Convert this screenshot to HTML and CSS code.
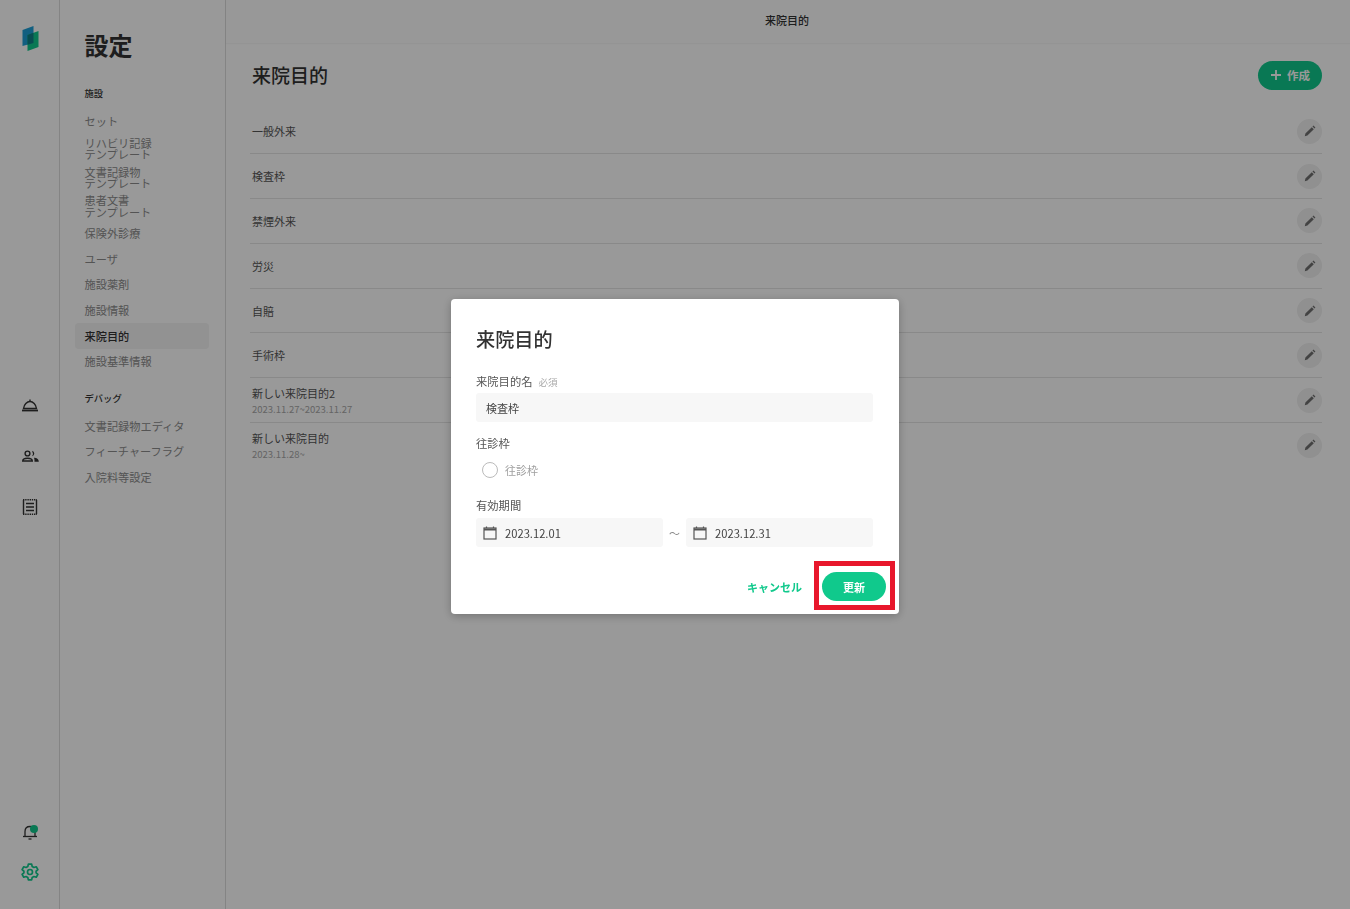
FILE: index.html
```html
<!DOCTYPE html>
<html lang="ja">
<head>
  <meta charset="UTF-8">
  <meta name="viewport" content="width=device-width, initial-scale=1.0">
  <title>来院目的</title>
  <link rel="stylesheet" href="styles.css">
</head>
<body>
  <div class="app">
    <aside class="rail">
      <svg class="logo" width="24" height="28" viewBox="0 0 24 28">
        <path d="M4.500 6 L15.500 2 V19 L4.500 22 Z" fill="#1f9fd6"/>
        <path d="M9.500 11 L20.500 7 V23 L9.500 27 Z" fill="#10c98c"/>
        <path d="M9.500 11 L15.500 8.800 V19 L9.500 20.700 Z" fill="#0f7f88"/>
      </svg>
      <div class="rail-group">
        <svg class="rail-icon" width="20" height="20" viewBox="0 0 20 20" fill="none" stroke="#333" stroke-width="1.400">
          <path d="M3.500 13.500 C4 9.500 7 6.500 10 6.500 C13 6.500 16 9.500 16.500 13.500 Z"/>
          <path d="M2 15.500 H18" stroke-width="1.800"/>
          <path d="M10 4.500 V6.500"/>
        </svg>
        <svg class="rail-icon" width="20" height="20" viewBox="0 1 20 20" fill="#333">
          <circle cx="7.500" cy="8.500" r="2.400" fill="none" stroke="#333" stroke-width="1.400"/>
          <path d="M12 5.800 A2.800 2.800 0 0 1 12 11.300 A5 5 0 0 0 12 5.800 Z"/>
          <path d="M2.700 16 C2.700 14 5 13.200 7.500 13.200 C10 13.200 12.300 14 12.300 16 Z" fill="none" stroke="#333" stroke-width="1.400"/>
          <path d="M14 12.800 C16.500 13 18.800 14 18.800 16.700 H14.500 C14.500 15 14.500 14 14 12.800 Z"/>
        </svg>
        <svg class="rail-icon" width="20" height="20" viewBox="0 0 20 20" fill="none" stroke="#333" stroke-width="1.400">
          <path d="M3.500 3 V17 M16.500 3 V17"/>
          <path d="M3 2.700 H17 M3 17.300 H17" stroke-dasharray="1.400 .8"/>
          <path d="M6 6.500 H14 M6 10 H14 M6 13.500 H14"/>
        </svg>
      </div>
      <div class="rail-bottom">
        <div class="bell">
          <svg width="20" height="20" viewBox="0 0 20 20" fill="none" stroke="#333" stroke-width="1.300">
            <path d="M5 14 V9.500 C5 6.500 7 4.500 10 4.500 C13 4.500 15 6.500 15 9.500 V14"/>
            <path d="M3 14.500 H17"/>
            <path d="M8.500 17 H11.500"/>
          </svg>
          <span class="bell-dot"></span>
        </div>
        <svg class="gear" width="20" height="20" viewBox="0 0 24 24" fill="none" stroke="#10c98c" stroke-width="2" stroke-linejoin="round">
          <path d="M10 2.500 H14 L14.600 5.400 L16.700 6.600 L19.500 5.700 L21.500 9.200 L19.300 11.100 V12.900 L21.500 14.800 L19.500 18.300 L16.700 17.400 L14.600 18.600 L14 21.500 H10 L9.400 18.600 L7.300 17.400 L4.500 18.300 L2.500 14.800 L4.700 12.900 V11.100 L2.500 9.200 L4.500 5.700 L7.300 6.600 L9.400 5.400 Z"/>
          <circle cx="12" cy="12" r="3"/>
        </svg>
      </div>
    </aside>

    <nav class="side">
      <h1 class="side-title">設定</h1>
      <h2 class="side-head">施設</h2>
      <ul class="side-list">
        <li>セット</li>
        <li>リハビリ記録<br>テンプレート</li>
        <li>文書記録物<br>テンプレート</li>
        <li>患者文書<br>テンプレート</li>
        <li>保険外診療</li>
        <li>ユーザ</li>
        <li>施設薬剤</li>
        <li>施設情報</li>
        <li class="active">来院目的</li>
        <li>施設基準情報</li>
      </ul>
      <h2 class="side-head debug">デバッグ</h2>
      <ul class="side-list">
        <li>文書記録物エディタ</li>
        <li>フィーチャーフラグ</li>
        <li>入院料等設定</li>
      </ul>
    </nav>

    <main class="main">
      <header class="topbar">来院目的</header>
      <div class="content">
        <div class="content-head">
          <h2 class="page-title">来院目的</h2>
          <button class="create-btn">
            <svg width="12" height="12" viewBox="0 0 12 12" stroke="#fff" stroke-width="1.800"><path d="M6 1 V11 M1 6 H11"/></svg>
            作成
          </button>
        </div>
        <ul class="rows">
          <li class="row"><div>一般外来</div><span class="edit"><svg width="12" height="12" viewBox="0 0 12 12" fill="#707070"><path d="M.8 11.200 L1.400 8.600 L7.800 2.200 L9.800 4.200 L3.400 10.600 Z M8.500 1.500 L9.400 .6 L11.400 2.600 L10.500 3.500 Z"/></svg></span></li>
          <li class="row"><div>検査枠</div><span class="edit"><svg width="12" height="12" viewBox="0 0 12 12" fill="#707070"><path d="M.8 11.200 L1.400 8.600 L7.800 2.200 L9.800 4.200 L3.400 10.600 Z M8.500 1.500 L9.400 .6 L11.400 2.600 L10.500 3.500 Z"/></svg></span></li>
          <li class="row"><div>禁煙外来</div><span class="edit"><svg width="12" height="12" viewBox="0 0 12 12" fill="#707070"><path d="M.8 11.200 L1.400 8.600 L7.800 2.200 L9.800 4.200 L3.400 10.600 Z M8.500 1.500 L9.400 .6 L11.400 2.600 L10.500 3.500 Z"/></svg></span></li>
          <li class="row"><div>労災</div><span class="edit"><svg width="12" height="12" viewBox="0 0 12 12" fill="#707070"><path d="M.8 11.200 L1.400 8.600 L7.800 2.200 L9.800 4.200 L3.400 10.600 Z M8.500 1.500 L9.400 .6 L11.400 2.600 L10.500 3.500 Z"/></svg></span></li>
          <li class="row"><div>自賠</div><span class="edit"><svg width="12" height="12" viewBox="0 0 12 12" fill="#707070"><path d="M.8 11.200 L1.400 8.600 L7.800 2.200 L9.800 4.200 L3.400 10.600 Z M8.500 1.500 L9.400 .6 L11.400 2.600 L10.500 3.500 Z"/></svg></span></li>
          <li class="row"><div>手術枠</div><span class="edit"><svg width="12" height="12" viewBox="0 0 12 12" fill="#707070"><path d="M.8 11.200 L1.400 8.600 L7.800 2.200 L9.800 4.200 L3.400 10.600 Z M8.500 1.500 L9.400 .6 L11.400 2.600 L10.500 3.500 Z"/></svg></span></li>
          <li class="row"><div class="dated">新しい来院目的2<small>2023.11.27~2023.11.27</small></div><span class="edit"><svg width="12" height="12" viewBox="0 0 12 12" fill="#707070"><path d="M.8 11.200 L1.400 8.600 L7.800 2.200 L9.800 4.200 L3.400 10.600 Z M8.500 1.500 L9.400 .6 L11.400 2.600 L10.500 3.500 Z"/></svg></span></li>
          <li class="row last"><div class="dated">新しい来院目的<small>2023.11.28~</small></div><span class="edit"><svg width="12" height="12" viewBox="0 0 12 12" fill="#707070"><path d="M.8 11.200 L1.400 8.600 L7.800 2.200 L9.800 4.200 L3.400 10.600 Z M8.500 1.500 L9.400 .6 L11.400 2.600 L10.500 3.500 Z"/></svg></span></li>
        </ul>
      </div>
    </main>
  </div>

  <div class="overlay">
    <div class="dialog">
      <h2 class="dialog-title">来院目的</h2>
      <div class="field-label">来院目的名<span class="required">必須</span></div>
      <div class="input">検査枠</div>
      <div class="field-label gap">往診枠</div>
      <div class="radio-row"><span class="radio"></span>往診枠</div>
      <div class="field-label gap-date">有効期間</div>
      <div class="date-row">
        <div class="input date">
          <svg width="14" height="14" viewBox="0 0 14 14" fill="none" stroke="#555" stroke-width="1.200"><rect x="1" y="2" width="12" height="11"/><path d="M1 3.500 H13" stroke-width="2"/><path d="M3.500 .5 V2 M10.500 .5 V2"/></svg>
          2023.12.01
        </div>
        <span class="tilde">～</span>
        <div class="input date">
          <svg width="14" height="14" viewBox="0 0 14 14" fill="none" stroke="#555" stroke-width="1.200"><rect x="1" y="2" width="12" height="11"/><path d="M1 3.500 H13" stroke-width="2"/><path d="M3.500 .5 V2 M10.500 .5 V2"/></svg>
          2023.12.31
        </div>
      </div>
      <div class="dialog-foot">
        <button class="cancel-btn">キャンセル</button>
        <button class="update-btn">更新</button>
      </div>
      <div class="callout"></div>
    </div>
  </div>
</body>
</html>
```

FILE: styles.css
```css
:root {
  --green: #10c98c;
  --text: #333333;
  --muted: #8c8c8c;
  --line: #e4e4e4;
}

* {
  box-sizing: border-box;
}

html, body {
  height: 100%;
}

body {
  margin: 0;
  font-family: "Noto Sans CJK JP", "Noto Sans", sans-serif;
  color: var(--text);
  background-color: #fff;
  overflow: hidden;
}

ul {
  list-style: none;
  margin: 0;
  padding: 0;
}

h1, h2 {
  margin: 0;
}

button {
  font-family: inherit;
  border: none;
  cursor: pointer;
}

.app {
  display: flex;
  height: 909px;
}

/* left icon rail */
.rail {
  width: 60px;
  flex-shrink: 0;
  display: flex;
  flex-direction: column;
  align-items: center;
  border-right: 1px solid #dcdcdc;
  padding-top: 24px;
}

.logo {
  display: block;
}

.rail-group {
  display: flex;
  flex-direction: column;
  gap: 31px;
  margin-top: 343px;
}

.rail-icon {
  display: block;
}

.rail-bottom {
  margin-top: auto;
  padding-bottom: 27px;
  display: flex;
  flex-direction: column;
  align-items: center;
  gap: 20px;
}

.bell {
  position: relative;
  width: 20px;
  height: 20px;
}

.bell-dot {
  position: absolute;
  top: 3px;
  right: 2px;
  width: 8px;
  height: 8px;
  border-radius: 50%;
  background-color: var(--green);
}

.gear {
  display: block;
}

/* settings menu */
.side {
  width: 166px;
  flex-shrink: 0;
  border-right: 1px solid #dcdcdc;
  padding: 27px 16px 0 15px;
}

.side-title {
  font-size: 24px;
  line-height: 35px;
  font-weight: 700;
  padding-left: 9.500px;
  margin-bottom: 24px;
}

.side-head {
  font-size: 9.300px;
  line-height: 14px;
  font-weight: 500;
  padding-left: 9.500px;
  margin-bottom: 9px;
}

.side-head.debug {
  margin-top: 16px;
}

.side-list li {
  display: flex;
  align-items: center;
  min-height: 25.600px;
  padding: 3.200px 9.500px;
  font-size: 11.200px;
  line-height: 11.200px;
  color: var(--muted);
}

.side-list li.active {
  background-color: #f3f3f3;
  border-radius: 4px;
  color: var(--text);
  font-weight: 500;
}

/* main area */
.main {
  flex: 1;
  min-width: 0;
}

.topbar {
  height: 43px;
  padding-right: 2px;
  background-color: #fefefe;
  text-align: center;
  font-size: 11px;
  line-height: 40px;
  font-weight: 500;
  box-shadow: 0 1px 1px rgba(0, 0, 0, 0.03);
}

.content {
  padding: 18px 28px 0 24px;
}

.content-head {
  display: flex;
  align-items: center;
  justify-content: space-between;
  padding-left: 2px;
  height: 29px;
  margin-bottom: 19.500px;
}

.page-title {
  font-size: 19px;
  line-height: 27px;
  padding-bottom: 2px;
  font-weight: 500;
}

.create-btn {
  display: flex;
  align-items: center;
  gap: 5px;
  width: 64px;
  height: 29px;
  padding: 0 0 2px 12px;
  border-radius: 15px;
  background-color: var(--green);
  color: #fff;
  font-size: 11.500px;
  font-weight: 700;
}

.row {
  display: flex;
  align-items: center;
  justify-content: space-between;
  height: 44.800px;
  padding: 0 0 0 2px;
  border-bottom: 1px solid var(--line);
  font-size: 11px;
  line-height: 14px;
  color: #555;
}

.row.last {
  border-bottom: none;
}

.row .dated {
  padding-top: 2px;
}

.row small {
  display: block;
  font-size: 9.500px;
  line-height: 14px;
  margin-top: 2px;
  color: #a8a8a8;
}

.edit {
  display: flex;
  align-items: center;
  justify-content: center;
  width: 25px;
  height: 25px;
  border-radius: 50%;
  background-color: #f0f0f0;
}

/* modal */
.overlay {
  position: fixed;
  inset: 0;
  background-color: rgba(0, 0, 0, 0.4);
}

.dialog {
  position: absolute;
  left: 451px;
  top: 299px;
  width: 448px;
  height: 315px;
  padding: 26px 26px 0 25px;
  background-color: #fff;
  border-radius: 4px;
  box-shadow: 0 2px 10px rgba(0, 0, 0, 0.25);
}

.dialog-title {
  font-size: 19.200px;
  line-height: 28px;
  font-weight: 500;
  margin-bottom: 21px;
}

.field-label {
  font-size: 11.300px;
  line-height: 14px;
  color: #555;
  margin-bottom: 4px;
}

.field-label.gap {
  margin-top: 14px;
  margin-bottom: 8px;
}

.field-label.gap-date {
  margin-top: 16px;
  margin-bottom: 6px;
}

.required {
  margin-left: 6px;
  font-size: 9.500px;
  color: #a8a8a8;
}

.input {
  display: flex;
  align-items: center;
  height: 29px;
  padding: 0 10px;
  background-color: #f7f7f7;
  border-radius: 3px;
  font-size: 11px;
  color: #444;
}

.radio-row {
  display: flex;
  align-items: center;
  gap: 7px;
  height: 24px;
  padding-left: 6px;
  font-size: 11px;
  color: #a0a0a0;
}

.radio {
  width: 16px;
  height: 16px;
  border: 1px solid #bbb;
  border-radius: 50%;
}

.date-row {
  display: flex;
  align-items: center;
}

.input.date {
  flex: 1;
  gap: 8px;
  padding: 0 7px;
  font-size: 11.200px;
}

.tilde {
  width: 23px;
  text-align: center;
  font-size: 11px;
  color: #888;
}

.dialog-foot {
  display: flex;
  justify-content: flex-end;
  align-items: center;
  gap: 20px;
  margin: 25px -13px 0 0;
}

.cancel-btn {
  padding: 0;
  background: none;
  color: var(--green);
  font-size: 11px;
  font-weight: 700;
}

.update-btn {
  width: 64px;
  height: 29px;
  border-radius: 15px;
  background-color: var(--green);
  color: #fff;
  font-size: 11px;
  font-weight: 700;
}

/* red highlight drawn on the screenshot */
.callout {
  position: absolute;
  left: 363px;
  top: 262px;
  width: 81px;
  height: 49px;
  border: 5px solid #e8172c;
}
```
